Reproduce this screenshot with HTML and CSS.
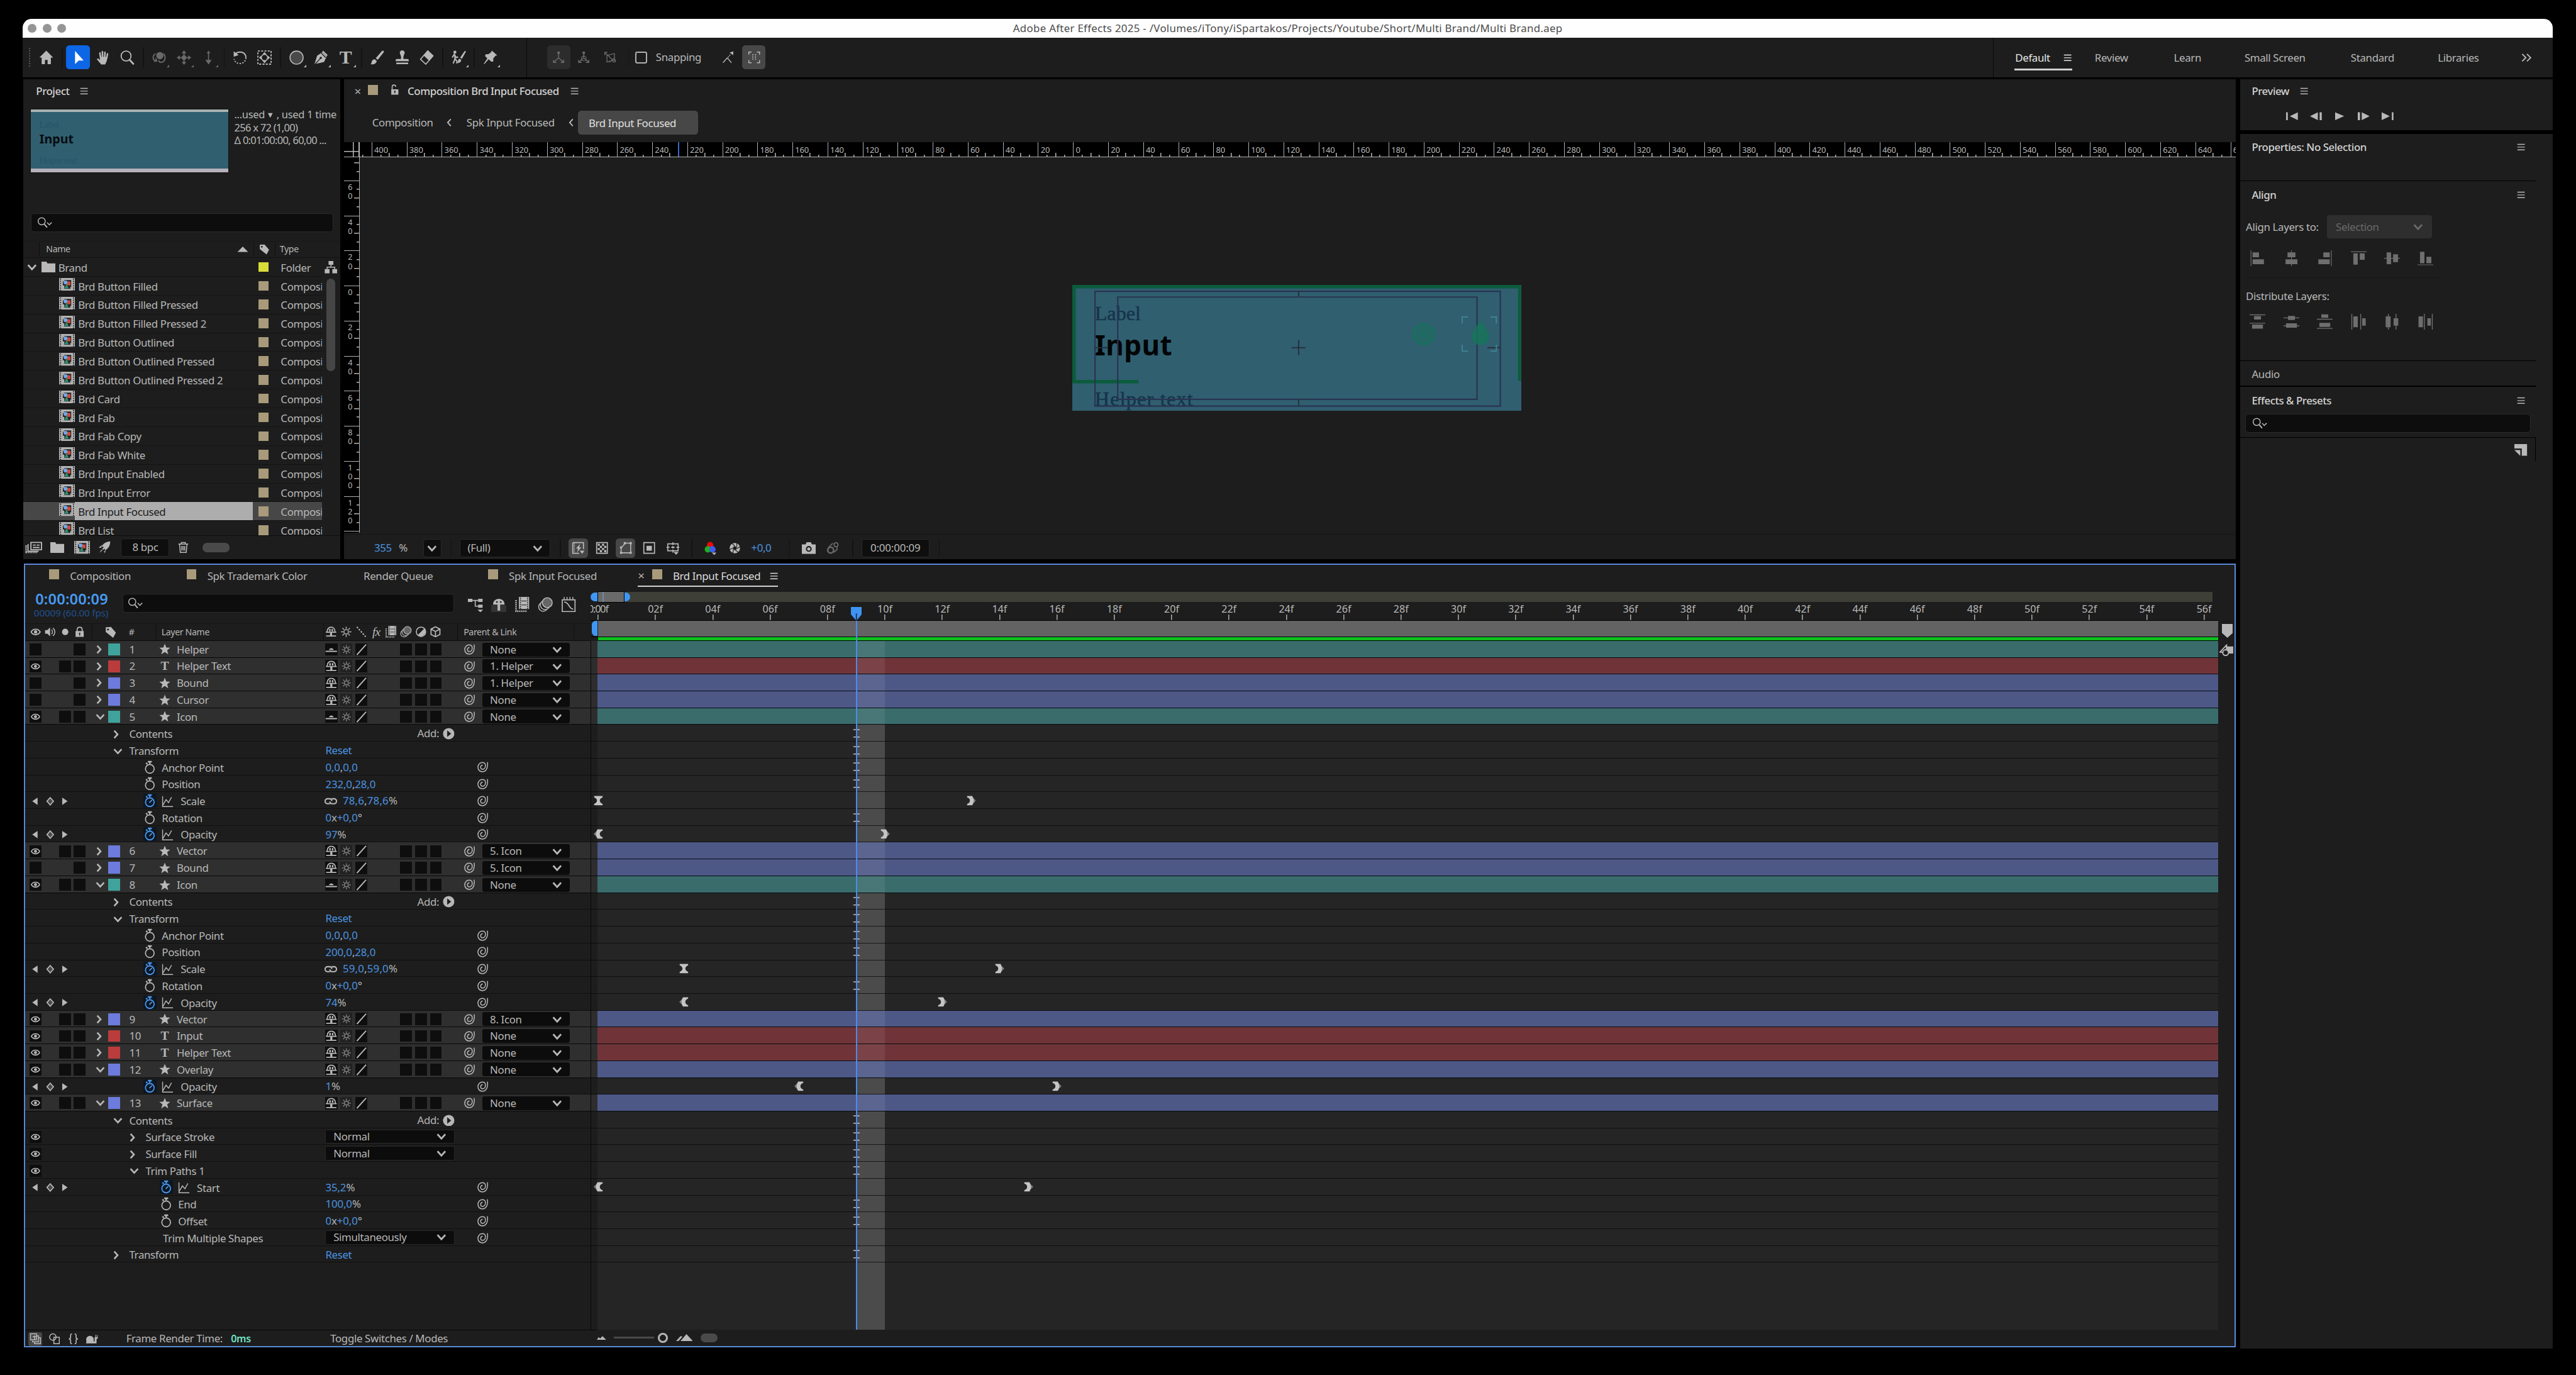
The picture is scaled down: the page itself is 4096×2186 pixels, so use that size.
FILE: index.html
```html
<!DOCTYPE html>
<html lang="en">
<head>
<meta charset="utf-8">
<title>Adobe After Effects 2025</title>
<link rel="stylesheet" href="styles.css">
</head>
<body>
<svg class="sprite" aria-hidden="true">
  <symbol id="home" viewBox="0 0 24 24"><path fill="currentColor" d="M12 1.500 1.500 12H5v10h5v-6.500h4V22h5V12h3.500z"/></symbol>
  <symbol id="arrow" viewBox="0 0 24 24"><path fill="currentColor" d="M7 2v20l5.500-5.500H20z"/></symbol>
  <symbol id="hand" viewBox="0 0 24 24"><path stroke="currentColor" stroke-width="2.400" stroke-linecap="round" d="M8.500 12 7.500 5M11.500 11 11.300 3M14.800 11l.4-7M17.800 12.500l1.200-6"/><path fill="currentColor" d="M7.300 11h11.800l-1.300 6.500-2.300 5h-6L3.300 15c-.8-1.400 1-2.300 2-1.300l2.500 2z"/></symbol>
  <symbol id="zoom" viewBox="0 0 24 24"><g fill="none" stroke="currentColor" stroke-width="1.700"><circle cx="10" cy="9.500" r="7.500"/><path stroke-width="2.600" stroke-linecap="round" d="m15.500 15.500 5.500 6"/></g></symbol>
  <symbol id="orbit" viewBox="0 0 24 24"><circle cx="13.500" cy="9" r="5.500" fill="currentColor"/><path fill="none" stroke="currentColor" stroke-width="1.800" d="M7 6C2 9 2 16 8 17M19 6c4 4 3 11-2 13-3 .8-5-.5-5-3M5 18l4-1-2-4"/></symbol>
  <symbol id="pan" viewBox="0 0 24 24"><path fill="currentColor" d="m12 1 3.500 4.500h-2.600V9h-1.800V5.500H8.500zM12 23l3.500-4.500h-2.600V15h-1.800v3.500H8.500zM1 12l4.500-3.500v2.600H9v1.800H5.500v2.600zM23 12l-4.500-3.500v2.600H15v1.800h3.500v2.600z"/><circle cx="12" cy="12" r="3.500" fill="currentColor"/></symbol>
  <symbol id="dolly" viewBox="0 0 24 24"><path fill="currentColor" d="m12 1.500 2.800 4h-2v10h4L12 22.500 7.200 15.500h4v-10h-2z"/></symbol>
  <symbol id="rotate" viewBox="0 0 24 24"><path fill="none" stroke="currentColor" stroke-width="1.900" d="M5 7c4-6 16-4 16 5"/><path fill="currentColor" d="M2.500 2.500v8.300L10 8z"/><path fill="none" stroke="currentColor" stroke-width="1.900" stroke-dasharray="2 2.200" d="M21 12c0 5-4 9-9 9s-8-3-9-7"/></symbol>
  <symbol id="anchor" viewBox="0 0 24 24"><g fill="none" stroke="currentColor"><path stroke-width="1.800" stroke-dasharray="3 2" d="M2 2h20v20H2z"/><circle cx="12" cy="12" r="4.800" stroke-width="1.500"/></g><path fill="currentColor" d="m12 3.500 3 3.500H9zM12 20.500l3-3.500H9zM3.500 12 7 9v6zM20.500 12 17 9v6z"/></symbol>
  <symbol id="ellipse" viewBox="0 0 24 24"><circle cx="12" cy="12" r="10" fill="#4a4a4a" stroke="currentColor" stroke-width="1.500"/></symbol>
  <symbol id="pen" viewBox="0 0 24 24"><path fill="currentColor" d="m2 22 4-13 8-5 6.500 6-4 8.500z"/><path stroke="#1d1d1d" stroke-width="1.300" d="m3 22 8-9M12.500 5.500l6.500 6.500"/><circle cx="11.500" cy="12.500" r="1.700" fill="#1d1d1d"/><path fill="currentColor" d="m15 1.500 7 6.500-1.500 1.800-7-6.500z"/></symbol>
  <symbol id="brush" viewBox="0 0 24 24"><path fill="currentColor" d="M21.500 1.500c1 .8.800 1.800.3 2.700L13 15.500l-3-2.700L19.500 2c.6-.6 1.300-.9 2-.5zM8.500 14.500l3 2.700C11 21 7 23 2 22c2-1 1.500-3 2.300-5 .8-1.700 2.400-2.700 4.200-2.500z"/></symbol>
  <symbol id="stamp" viewBox="0 0 24 24"><path fill="currentColor" d="M12 1a3.700 3.700 0 0 1 3.400 5.200c-1.600 3.300-2 5.300-1.500 7.800H20c1.500 0 2 1 2 3.500H2C2 15 2.500 14 4 14h6.100c.5-2.500.1-4.500-1.500-7.800A3.700 3.700 0 0 1 12 1zM3 19.500h18V22H3z"/></symbol>
  <symbol id="eraser" viewBox="0 0 24 24"><path fill="currentColor" d="m13.500 1 8.500 8-6 8-9-8.500z"/><path fill="none" stroke="currentColor" stroke-width="1.600" d="m13.500 1.800 8 7.500L10.500 22 2.500 14.500z"/></symbol>
  <symbol id="roto" viewBox="0 0 24 24"><circle cx="7" cy="3.800" r="2.300" fill="currentColor"/><path fill="none" stroke="currentColor" stroke-width="2" d="M3 12l3-5 3 5 3-1M7 9v5l-2.500 7M7 14l3 3v4"/><path fill="currentColor" d="M23 2c.8.700.5 1.500 0 2.300L17.500 14 15 12l6.500-9.500c.5-.6 1-.8 1.500-.5zM14 13.500l2.500 2c0 3-2.500 5-6 4.500 1.300-1 1-2 1.400-3.500.3-1.600 1-2.700 2.100-3z"/></symbol>
  <symbol id="pin" viewBox="0 0 24 24"><path fill="currentColor" d="m14.500 1.500 8 7-2.700.8-3.300 4 .2 4.700-3.200.2-4-3.700L3 22l-.8-.8 5.300-8-3.300-3.500.5-2.500 4.800-.4 3.700-3z"/></symbol>
  <symbol id="axis" viewBox="0 0 24 24"><circle cx="12" cy="3.500" r="2.500" fill="currentColor"/><path fill="none" stroke="currentColor" stroke-width="1.600" d="M12 4v9l-9 8M12 13l9 8M2.500 16.500V21.500H8M21.500 16.500V21.500H16"/></symbol>
  <symbol id="axisworld" viewBox="0 0 24 24"><circle cx="12" cy="3.500" r="2.500" fill="currentColor"/><circle cx="12" cy="14" r="4.500" fill="none" stroke="currentColor" stroke-width="1.400"/><path fill="none" stroke="currentColor" stroke-width="1.600" d="M12 4v9l-9 8M12 13l9 8M2.500 16.500V21.500H8M21.500 16.500V21.500H16"/></symbol>
  <symbol id="axisview" viewBox="0 0 24 24"><path fill="none" stroke="currentColor" stroke-width="1.500" d="M6 8.500 20 5v12L6 20.500zM2 3l15 14M2 8V2.500h5M11 21l10-9M16 20.500h5.500V16"/></symbol>
  <symbol id="snapedge" viewBox="0 0 24 24"><path fill="none" stroke="currentColor" stroke-width="1.600" d="m3 22 8-9 8 9"/><path fill="none" stroke="currentColor" stroke-width="1.600" stroke-dasharray="2.500 1.500" d="m12.500 12 5-6"/><path fill="currentColor" d="m15.500 3 7-2-.5 7z"/></symbol>
  <symbol id="snapbox" viewBox="0 0 24 24"><g fill="none" stroke="currentColor" stroke-width="1.700"><path d="M2 7V2h5M17 2h5v5M22 17v5h-5M7 22H2v-5"/><path stroke-dasharray="2.500 1.500" d="M9.500 6v12M14.500 6v12"/></g></symbol>
  <symbol id="menu" viewBox="0 0 16 16"><path stroke="currentColor" stroke-width="1.900" d="M0 2h16M0 8h16M0 14h16"/></symbol>
  <symbol id="more" viewBox="0 0 24 24"><path fill="none" stroke="currentColor" stroke-width="2.800" d="m2 4 8 8-8 8M12.500 4l8 8-8 8"/></symbol>
  <symbol id="search" viewBox="0 0 32 24"><g fill="none" stroke="currentColor" stroke-width="2"><circle cx="9.500" cy="9" r="7.500"/><path stroke-width="2.600" d="m15 15 6 7"/><path d="m21 11.500 4.500 5 5-5"/></g></symbol>
  <symbol id="down" viewBox="0 0 24 24"><path fill="none" stroke="currentColor" stroke-width="4.300" d="m2.500 6.500 9.500 10.500L21.500 6.500"/></symbol>
  <symbol id="right" viewBox="0 0 24 24"><path fill="none" stroke="currentColor" stroke-width="4.300" d="M7.500 2.500 16 12l-8.500 9.500"/></symbol>
  <symbol id="left" viewBox="0 0 24 24"><path fill="none" stroke="currentColor" stroke-width="3" d="m15 3.500-7.500 8.500L15 20.500"/></symbol>
  <symbol id="tri" viewBox="0 0 24 12"><path fill="currentColor" d="M12 0l12 12H0z"/></symbol>
  <symbol id="tag" viewBox="0 0 24 24"><path fill="currentColor" fill-rule="evenodd" d="M1.500 1.500 12 1l10 11.500L16.500 23 1.500 11zM6 4a2 2 0 1 0 .01 4A2 2 0 0 0 6 4z"/></symbol>
  <symbol id="folder" viewBox="0 0 28 22"><path fill="currentColor" d="M0 0h10l2 3.500h16V22H0z"/></symbol>
  <symbol id="comp" viewBox="0 0 32 26"><path fill="#b4b4b4" d="M0 0h32v26H0z"/><path stroke="#1d1d1d" stroke-width="2" stroke-dasharray="2.500 2" d="M3 1v25M29 1v25"/><path fill="#222" d="M7.500 4h17v18h-17z"/><path fill="#b4b4b4" d="M7.500 4h3v3h-3zM7.500 15h3v7h-3zM22.500 18h2v4h-2z"/><path fill="#d04a3a" d="M16 7h7v8h-7z"/><path fill="#2f8f72" d="m15 12 4.500 9h-9z"/><circle cx="13" cy="9" r="4" fill="#6ea8e8"/></symbol>
  <symbol id="network" viewBox="0 0 26 26"><path fill="currentColor" d="M8 0h10v8H8zM0 17h10v9H0zM16 17h10v9H16z"/><path fill="none" stroke="currentColor" stroke-width="2" d="M13 8v5M5 17v-4h16v4"/></symbol>
  <symbol id="footage" viewBox="0 0 36 24"><g fill="none" stroke="currentColor" stroke-width="2.500"><path d="M12 1.500h22v15H12zM6 5v15h22"/><path stroke-dasharray="2 1.500" stroke-width="4" d="M2 8v16M2 22h24"/><path d="M16 7h6M24 7h6M16 12h14"/></g></symbol>
  <symbol id="rocket" viewBox="0 0 24 24"><path fill="currentColor" d="M22.500 1c.5 7-3 13-9.500 17l-1-4-3 3-1-3 3-2.500-4-1C9 5 15 1.500 22.500 1zM8 7 1 12.500l4.500.5zM14.500 18 12 23l-1-4zM7 16l-5 6 6-4z"/></symbol>
  <symbol id="trash" viewBox="0 0 24 24"><path fill="none" stroke="currentColor" stroke-width="2" d="M2 5h20M8 5V2h8v3M4.500 5 6 22h12l1.500-17M9 9v9M12 9v9M15 9v9"/></symbol>
  <symbol id="lockopen" viewBox="0 0 20 24"><path fill="currentColor" fill-rule="evenodd" d="M3 11h16v12H3zM11 14a2 2 0 0 0-1 3.500V20h2v-2.500a2 2 0 0 0-1-3.500z"/><path fill="none" stroke="currentColor" stroke-width="2.200" d="M5 12V5.500C5 0 13 0 13 5.500"/></symbol>
  <symbol id="lock" viewBox="0 0 20 24"><path fill="currentColor" fill-rule="evenodd" d="M1 10h18v13H1zM10 13.500a2 2 0 0 0-1 3.500v3h2v-3a2 2 0 0 0-1-3.500z"/><path fill="none" stroke="currentColor" stroke-width="2.400" d="M4.500 11V6.500c0-6.500 11-6.500 11 0V11"/></symbol>
  <symbol id="fast" viewBox="0 0 24 24"><path fill="none" stroke="currentColor" stroke-width="2" d="M2 2h20v12M14 22H2V2"/><path stroke="currentColor" stroke-dasharray="1.500 1.500" stroke-width="2" d="M5 3v18"/><path fill="currentColor" d="m16 4-8 9h4l-2 7 8-9h-4zM15 17h9l-4.500 6z"/></symbol>
  <symbol id="checker" viewBox="0 0 24 24"><path fill="none" stroke="currentColor" stroke-width="2" d="M2 2h20v20H2z"/><path fill="currentColor" d="M4 4h4v4H4zM12 4h4v4h-4zM8 8h4v4H8zM16 8h4v4h-4zM4 12h4v4H4zM12 12h4v4h-4zM8 16h4v4H8zM16 16h4v4h-4z"/></symbol>
  <symbol id="mask" viewBox="0 0 24 24"><path fill="none" stroke="currentColor" stroke-width="1.800" d="M3 21V11C6 9 9 6 10 3h11v18z"/><path fill="currentColor" d="M8 1h4v4H8zM19 1h4v4h-4zM1 9h4v4H1zM1 19h4v4H1zM19 19h4v4h-4z"/></symbol>
  <symbol id="region" viewBox="0 0 24 24"><path fill="none" stroke="currentColor" stroke-width="2" d="M2 2h20v20H2z"/><path fill="currentColor" d="M7 8h10v9H7z"/></symbol>
  <symbol id="guides" viewBox="0 0 24 24"><path fill="none" stroke="currentColor" stroke-width="1.800" d="M3 4h18v12H3zM12 1v5M12 14v5M1 10h5M18 10h5M9 10h6M12 8v4"/><path fill="currentColor" d="M13 18h9l-4.500 5z"/></symbol>
  <symbol id="rgb" viewBox="0 0 24 24"><circle cx="10" cy="6" r="5.500" fill="#f00808"/><circle cx="6" cy="13.500" r="5.500" fill="#1fae1f"/><circle cx="14" cy="13.500" r="5.500" fill="#3f5cf0"/><path fill="#b4b4b4" d="M13 19h8l-4 4.500z"/></symbol>
  <symbol id="aperture" viewBox="0 0 24 24"><circle cx="12" cy="12" r="10.500" fill="currentColor"/><circle cx="12" cy="12" r="3.800" fill="#1d1d1d"/><path stroke="#1d1d1d" stroke-width="1.500" d="M12 8 6 2M16 10V1M16 13l7-4M13 16l7 5M9 15l-1 8M8 12l-7 3"/></symbol>
  <symbol id="camera" viewBox="0 0 26 22"><path fill="currentColor" fill-rule="evenodd" d="M0 4h7l2-4h8l2 4h7v18H0zM13 7a5.500 5.500 0 1 0 .01 11A5.500 5.500 0 0 0 13 7z"/><circle cx="13" cy="12.500" r="3" fill="currentColor"/></symbol>
  <symbol id="snapshot" viewBox="0 0 24 24"><g fill="none" stroke="currentColor"><circle cx="8" cy="16" r="5.500" stroke-width="3"/><circle cx="18" cy="6" r="3.800" stroke-width="2"/><path stroke-width="2" d="M4 11 12 3M20 9v6l-6 5"/></g></symbol>
  <symbol id="flow" viewBox="0 0 24 24"><path fill="currentColor" d="M0 3h7v5H0zM16 3h7v5h-7zM16 12h7v5h-7zM15 20h9l-4.500 4z"/><path fill="none" stroke="currentColor" stroke-width="1.600" d="M7 5.500h9M11.500 5.500v9H16"/></symbol>
  <symbol id="shy" viewBox="0 0 24 24"><path fill="none" stroke="currentColor" stroke-width="2.200" d="M4 12C4 6 7.500 2.800 12 2.800S20 6 20 12M1.500 13h21M12 12v9M2 20.500h20"/><path fill="currentColor" d="M8 6.500h3V11H8zM13 6.500h3V11h-3zM10 13h4v8h-4z"/></symbol>
  <symbol id="shyhid" viewBox="0 0 24 24"><path fill="currentColor" d="M7.500 12.500c1-4.500 8-4.500 9 0zM1 14h22v2.500H1z"/></symbol>
  <symbol id="shybtn" viewBox="0 0 24 24"><path fill="#343434" d="M0 13h24v11H0z"/><path fill="currentColor" d="M3 12C3 6.500 7 3 12 3s9 3.500 9 9h-7v9.500h-4V12z"/><circle cx="9" cy="8" r="1.400" fill="#1d1d1d"/><circle cx="15" cy="8" r="1.400" fill="#1d1d1d"/></symbol>
  <symbol id="film" viewBox="0 0 24 24"><path fill="currentColor" d="M7 0h16v19H7z"/><path stroke="#1d1d1d" stroke-width="1.500" stroke-dasharray="1.600 1.600" d="M9.500 1v18M20.500 1v18"/><path fill="none" stroke="currentColor" stroke-width="2.500" stroke-dasharray="2 1.200" d="M2.500 5v17.500H19"/><path stroke="#1d1d1d" d="M11 6.500h8M11 12.500h8"/></symbol>
  <symbol id="blur" viewBox="0 0 24 24"><g stroke="currentColor" stroke-width="1.500"><circle cx="8.500" cy="15.500" r="7" fill="#1d1d1d"/><circle cx="11.500" cy="12.500" r="7.300" fill="#1d1d1d"/><circle cx="15" cy="9" r="7.700" fill="#666"/></g></symbol>
  <symbol id="graphed" viewBox="0 0 24 24"><path fill="none" stroke="currentColor" stroke-width="1.700" d="M2 4.500h20V23H2zM5 8c8 0 7 11 14 11"/><path stroke="currentColor" stroke-width="1.400" d="M5 0v4M9.500 0v4M14 0v4M18.500 0v4"/></symbol>
  <symbol id="eye" viewBox="0 0 24 24"><path fill="none" stroke="currentColor" stroke-width="2.600" d="M2 12c4-8 16-8 20 0-4 8-16 8-20 0z"/><circle cx="12" cy="12" r="3.600" fill="currentColor"/></symbol>
  <symbol id="speaker" viewBox="0 0 24 24"><path fill="currentColor" d="M1 8h5l6-6v20l-6-6H1z"/><path fill="none" stroke="currentColor" stroke-width="2" d="M15 7c3 2 3 8 0 10M18 3.500c6 4 6 13 0 17"/></symbol>
  <symbol id="dot" viewBox="0 0 24 24"><circle cx="12" cy="12" r="7" fill="currentColor"/></symbol>
  <symbol id="sun" viewBox="0 0 24 24"><g fill="none" stroke="currentColor" stroke-width="1.800"><circle cx="12" cy="12" r="4.500"/><path d="M12 1.500v4.500M12 18v4.500M1.500 12H6M18 12h4.500M4.500 4.500l3.200 3.200M16.300 16.300l3.200 3.200M19.500 4.500l-3.200 3.200M7.700 16.300l-3.200 3.200"/></g></symbol>
  <symbol id="quality" viewBox="0 0 24 24"><path stroke="currentColor" stroke-width="2.600" stroke-dasharray="3.500 2.500" d="m3 2 18 20"/></symbol>
  <symbol id="slash" viewBox="0 0 24 24"><path stroke="currentColor" stroke-width="2.300" d="M3 22 21 2"/></symbol>
  <symbol id="adjust" viewBox="0 0 24 24"><circle cx="12" cy="12" r="9.500" fill="none" stroke="currentColor" stroke-width="2"/><path fill="currentColor" d="M18.700 5.300 5.300 18.700A9.500 9.500 0 0 0 18.700 5.300z"/></symbol>
  <symbol id="cube" viewBox="0 0 24 24"><path fill="none" stroke="currentColor" stroke-width="2.200" d="m12 2 9 4.500v11L12 22l-9-4.500v-11zM3 6.500l9 5 9-5M12 11.500V22"/></symbol>
  <symbol id="star" viewBox="0 0 24 24"><path fill="currentColor" d="m12 .5 3.200 8.200 8.300.3-6.500 5.300 2.300 8.700-7.300-5-7.300 5L7 14.300.5 9l8.300-.3z"/></symbol>
  <symbol id="spiral" viewBox="0 0 24 24"><path fill="none" stroke="currentColor" stroke-width="1.900" d="M21.500 2c.9 4 .7 8-.6 12-1.600 5-5 7.500-9.400 7.500-5.300 0-9-3.800-9-9C2.500 7 6.200 3 11.300 3c4 0 6.400 2.500 6.400 6.300 0 4.200-2.600 7.200-5.700 7.200-2.500 0-4.100-1.500-4.100-4 0-2.300 1.600-4.200 4.100-4.600"/></symbol>
  <symbol id="watch" viewBox="0 0 24 28"><g fill="none" stroke="currentColor" stroke-width="2.200"><circle cx="12" cy="17" r="8.800"/><path stroke-width="3" d="M8 2.500h8M12 2v5M4.500 5 7 7.500"/></g></symbol>
  <symbol id="watchon" viewBox="0 0 24 28"><g fill="none" stroke="currentColor" stroke-width="2.400"><circle cx="12" cy="17" r="8.800"/><path stroke-width="3" d="M8 2.500h8M12 2v5M4.500 5 7 7.500"/><path d="m11 18 5.500-5.500"/></g></symbol>
  <symbol id="curve" viewBox="0 0 24 24"><path fill="none" stroke="currentColor" stroke-width="1.800" d="M2 1v21h21M2 20l7-12 5 6 6-11"/></symbol>
  <symbol id="link" viewBox="0 0 28 20"><g fill="none" stroke="currentColor" stroke-width="2.700"><path d="M12 15H7.500a5 5 0 0 1 0-10h4c3 0 4.500 2 4.500 4.500"/><path d="M16 5h4.500a5 5 0 0 1 0 10h-4c-3 0-4.500-2-4.500-4.500"/></g></symbol>
  <symbol id="kprev" viewBox="0 0 24 24"><path fill="currentColor" d="M18 3v18L5 12z"/></symbol>
  <symbol id="knext" viewBox="0 0 24 24"><path fill="currentColor" d="M6 3v18l13-9z"/></symbol>
  <symbol id="kadd" viewBox="0 0 24 24"><path fill="#4a4a4a" stroke="currentColor" stroke-width="2.500" d="m12 3 8 9-8 9-8-9z"/></symbol>
  <symbol id="addplay" viewBox="0 0 24 24"><circle cx="12" cy="12" r="11.500" fill="currentColor"/><path fill="#1d1d1d" d="M9 5.500v13l8-6.500z"/></symbol>
  <symbol id="ibeam" viewBox="0 0 16 20"><path fill="none" stroke="#b9b9c4" stroke-width="2.200" d="M1 2h5l2 1.500L10 2h5M1 18h5l2-1.500L10 18h5M8 3v14"/></symbol>
  <symbol id="keyhour" viewBox="0 0 20 20"><path fill="#c4c4c4" d="M1 0h18v3c-3 1-6 3.500-6 7s3 6 6 7v3H1v-3c3-1 6-3.500 6-7S4 4 1 3z"/></symbol>
  <symbol id="keyin" viewBox="0 0 20 20"><path fill="#7f7f7f" d="M10 0v20L0 10z"/><path fill="#c4c4c4" d="M8 0h11v3c-4 1-6 3.500-6 7s2 6 6 7v3H8C4 13 4 7 8 0z"/></symbol>
  <symbol id="keyout" viewBox="0 0 20 20"><path fill="#7f7f7f" d="M10 0v20l10-10z"/><path fill="#c4c4c4" d="M12 0H1v3c4 1 6 3.500 6 7s-2 6-6 7v3h11c4-7 4-13 0-20z"/></symbol>
  <symbol id="draft" viewBox="0 0 24 24"><path fill="none" stroke="currentColor" stroke-width="1.900" d="M2 2h12v12H2zM6 16v2h12V6h-3M10 19v3h12V10h-3M6 8h8M10 5v9"/></symbol>
  <symbol id="modes" viewBox="0 0 24 24"><g fill="none" stroke="currentColor" stroke-width="1.900"><circle cx="9" cy="8.500" r="6.500"/><path d="M11 9h11v13H11z"/></g></symbol>
  <symbol id="braces" viewBox="0 0 24 24"><path fill="none" stroke="currentColor" stroke-width="2.300" d="M9 1C5 1 6 5 6 8s-1 4-4 4c3 0 4 1 4 4s-1 7 3 7M15 1c4 0 3 4 3 7s1 4 4 4c-3 0-4 1-4 4s1 7-3 7"/></symbol>
  <symbol id="snail" viewBox="0 0 28 24"><path fill="currentColor" d="M1 18a9 9 0 1 1 16 0h3V8h2V2h1.500v6H26V3h1.500v8l-3 2v10H0v-3z"/></symbol>
  <symbol id="hill" viewBox="0 0 20 8"><path fill="currentColor" d="M0 8 4 2l3 3 5-5 8 8z"/></symbol>
  <symbol id="hills" viewBox="0 0 34 14"><path fill="currentColor" d="M9 14 21 0l13 14zM0 14 9 4l4 1-8 9z"/></symbol>
  <symbol id="first" viewBox="0 0 24 16"><path fill="currentColor" d="M0 0h3.500v16H0zM24 0v16L7.500 8z"/></symbol>
  <symbol id="prevf" viewBox="0 0 24 16"><path fill="currentColor" d="M16 0v16L0 8zM19.500 0H24v16h-4.500z"/></symbol>
  <symbol id="play" viewBox="0 0 18 16"><path fill="currentColor" d="M0 0l18 8-18 8z"/></symbol>
  <symbol id="nextf" viewBox="0 0 24 16"><path fill="currentColor" d="M8 0v16l16-8zM0 0h4.500v16H0z"/></symbol>
  <symbol id="last" viewBox="0 0 24 16"><path fill="currentColor" d="M20.500 0H24v16h-3.500zM0 0v16l16.500-8z"/></symbol>
  <symbol id="al1" viewBox="0 0 32 32"><path fill="currentColor" d="M2 0h1.500v32H2zM6 4h13v10H6zM6 18h23v10H6z"/></symbol>
  <symbol id="al2" viewBox="0 0 32 32"><path fill="currentColor" d="M15.300 0h1.500v32h-1.500zM8 4h16v10H8zM4 18h24v10H4z"/></symbol>
  <symbol id="al3" viewBox="0 0 32 32"><path fill="currentColor" d="M28.500 0H30v32h-1.500zM13 4h13v10H13zM3 18h23v10H3z"/></symbol>
  <symbol id="al4" viewBox="0 0 32 32"><path fill="currentColor" d="M0 2h32v1.500H0zM5 6h9v23H5zM18 6h10v13H18z"/></symbol>
  <symbol id="al5" viewBox="0 0 32 32"><path fill="currentColor" d="M0 15.300h32v1.500H0zM5 4h9v24H5zM18 8h10v16H18z"/></symbol>
  <symbol id="al6" viewBox="0 0 32 32"><path fill="currentColor" d="M0 28.500h32V30H0zM5 3h9v23H5zM18 13h10v13H18z"/></symbol>
  <symbol id="di1" viewBox="0 0 32 32"><path fill="currentColor" d="M0 1h32v1.800H0zM9 4.500h14v7H9zM0 18h32v1.800H0zM5 21.500h22V30H5z"/></symbol>
  <symbol id="di2" viewBox="0 0 32 32"><path fill="currentColor" d="M0 7.300h32V9H0zM9 4h14v8.500H9zM0 23.300h32V25H0zM5 19h22v9H5z"/></symbol>
  <symbol id="di3" viewBox="0 0 32 32"><path fill="currentColor" d="M9 1h14v7H9zM0 10h32v1.800H0zM5 18h22v8.500H5zM0 28.500h32v1.800H0z"/></symbol>
  <symbol id="di4" viewBox="0 0 32 32"><path fill="currentColor" d="M1 0h1.800v32H1zM5 5h9v22H5zM19 0h1.800v32H19zM23 9h7v15h-7z"/></symbol>
  <symbol id="di5" viewBox="0 0 32 32"><path fill="currentColor" d="M7.500 0h1.800v32H7.500zM3 5h10v22H3zM23 0h1.800v32H23zM19 9h9.500v15H19z"/></symbol>
  <symbol id="di6" viewBox="0 0 32 32"><path fill="currentColor" d="M2 5h9v22H2zM13 0h1.800v32H13zM20 9h7v15h-7zM29 0h1.800v32H29z"/></symbol>
  <symbol id="note" viewBox="0 0 26 24"><path fill="currentColor" d="M0 0h26v24H15V9H0zM0 12h12v12z"/></symbol>
  <symbol id="marker" viewBox="0 0 22 28"><path fill="currentColor" d="M0 0h22v18L11 28 0 18z"/></symbol>
  <symbol id="compbtn" viewBox="0 0 30 26"><path fill="none" stroke="currentColor" stroke-width="2.500" d="M1 17 15 2v15z"/><path fill="currentColor" d="M14 5h15v15H14z"/><circle cx="13" cy="18" r="6" fill="#1d1d1d" stroke="currentColor" stroke-width="2.500"/></symbol>
</svg>

<div class="screen">
<div class="window">
  <header class="titlebar">
    <div class="lights"><i></i><i></i><i></i></div>
    <span class="title">Adobe After Effects 2025 - /Volumes/iTony/iSpartakos/Projects/Youtube/Short/Multi Brand/Multi Brand.aep</span>
  </header>

  <nav class="toolbar">
    <div class="tools" id="tools"></div>
    <div class="snapping">
      <span class="toolbtn dimmed"><svg class="ic26"><use href="#axis"/></svg></span>
      <svg class="ic26 dim"><use href="#axisworld"/></svg>
      <svg class="ic26 dim"><use href="#axisview"/></svg>
      <i class="vsep"></i>
      <i class="checkbox"></i>
      <span class="snaplabel">Snapping</span>
      <svg class="ic26"><use href="#snapedge"/></svg>
      <span class="toolbtn lit"><svg class="ic26"><use href="#snapbox"/></svg></span>
    </div>
    <div class="workspaces">
      <span class="ws active">Default <svg class="menu"><use href="#menu"/></svg></span>
      <span class="ws w2">Review</span><span class="ws w3">Learn</span><span class="ws w4">Small Screen</span><span class="ws w5">Standard</span><span class="ws w6">Libraries</span>
      <svg class="ic22"><use href="#more"/></svg>
    </div>
  </nav>

  <div class="workarea">
    <div class="mainside">
      <div class="upper">
        <section class="project">
          <div class="tabline"><b>Project</b><svg class="menu"><use href="#menu"/></svg></div>
          <div class="preview">
            <div class="thumb"><span class="t-label">Label</span><span class="t-input">Input</span><span class="t-help">Helper text</span></div>
            <div class="info"><p class="wide">...used<small>▼</small> , used 1 time</p><p>256 x 72 (1,00)</p><p>Δ 0:01:00:00, 60,00 ...</p></div>
          </div>
          <div class="searchbox"><svg class="search"><use href="#search"/></svg></div>
          <div class="phead"><span class="h-name">Name</span><svg class="h-tri"><use href="#tri"/></svg><span class="h-tag"><svg class="ic22"><use href="#tag"/></svg></span><span class="h-type">Type</span></div>
          <div class="plist">
            <div class="prows" id="prows"></div>
            <div class="pscroll"><svg class="net"><use href="#network"/></svg><i></i></div>
          </div>
          <div class="pfoot">
            <svg class="ic-foot"><use href="#footage"/></svg>
            <svg class="ic-folder"><use href="#folder"/></svg>
            <svg class="ic-comp"><use href="#comp"/></svg>
            <svg class="ic26"><use href="#rocket"/></svg>
            <span class="darkbox bpc">8 bpc</span>
            <svg class="ic24"><use href="#trash"/></svg>
            <i class="pill"></i>
          </div>
        </section>

        <section class="viewer">
          <div class="vtab"><span class="x">×</span><i class="sw"></i><svg class="ic-lock"><use href="#lockopen"/></svg><b>Composition Brd Input Focused</b><svg class="menu"><use href="#menu"/></svg></div>
          <div class="crumbs"><span class="c1">Composition</span><svg class="ic20"><use href="#left"/></svg><span class="c2">Spk Input Focused</span><svg class="ic20"><use href="#left"/></svg><span class="crumb">Brd Input Focused</span></div>
          <div class="hrulerline"><div class="corner"></div><div class="hruler" id="hruler"></div></div>
          <div class="stage">
            <div class="vruler" id="vruler"></div>
            <div class="canvas">
              <div class="comp">
                <span class="k-label">Label</span>
                <span class="k-input">Input</span>
                <span class="k-help">Helper text</span>
                <svg class="overlay" viewBox="0 0 908 255">
                  <path fill="#0b5c3c" d="M0 0h908v194h-6V7H7v185h127v7H0z"/>
                  <g fill="none" stroke="#2a3450" stroke-width="2.800"><path d="M46 13h820v232H46zM92 24.500h727v207H92z"/></g>
                  <g fill="none" stroke="#26303c" stroke-width="2.500"><path d="M458 112v30M444 127h28M458 13v10M458 232v11M46 127h26M840 127h26"/></g>
                  <g opacity=".8"><circle cx="711" cy="100" r="20" fill="none" stroke="#17735a" stroke-width="5"/><path stroke="#17735a" stroke-width="4" d="m703 91 16 17m0-17-16 17"/><circle cx="711" cy="100" r="22" fill="#17735a" fill-opacity=".45"/></g>
                  <path fill="#17735a" fill-opacity=".85" d="M826 72c11 16 18 24 18 33s-8 17-18 17-18-8-18-17 7-17 18-33z"/>
                  <path fill="none" stroke="#3f8294" stroke-width="2.500" d="M789 78V65h12M846 65h12v13M858 121v13h-12M801 134h-12v-13"/>
                </svg>
              </div>
            </div>
          </div>
          <div class="vfoot">
            <span class="blue z">355</span><span class="pct">%</span>
            <span class="darkbox mini"><svg class="ic20"><use href="#down"/></svg></span>
            <i class="vsep"></i>
            <span class="darkbox full">(Full)<svg class="ic20"><use href="#down"/></svg></span>
            <i class="vsep s2"></i>
            <span class="fb on"><svg class="ic26"><use href="#fast"/></svg></span>
            <span class="fb"><svg class="ic26"><use href="#checker"/></svg></span>
            <span class="fb on"><svg class="ic26"><use href="#mask"/></svg></span>
            <span class="fb"><svg class="ic26"><use href="#region"/></svg></span>
            <span class="fb"><svg class="ic28"><use href="#guides"/></svg></span>
            <i class="vsep s3"></i>
            <span class="fb"><svg class="ic28"><use href="#rgb"/></svg></span>
            <span class="fb"><svg class="ic24"><use href="#aperture"/></svg></span>
            <span class="blue ex">+0,0</span>
            <i class="vsep s4"></i>
            <span class="fb"><svg class="ic-cam"><use href="#camera"/></svg></span>
            <span class="fb dim2"><svg class="ic26"><use href="#snapshot"/></svg></span>
            <i class="vsep s5"></i>
            <span class="darkbox tc">0:00:00:09</span>
            <i class="vsep s6"></i>
          </div>
        </section>
      </div>

      <section class="timeline">
        <div class="ttabs">
          <span class="tt t1"><i class="sw"></i>Composition</span>
          <span class="tt t2"><i class="sw"></i>Spk Trademark Color</span>
          <span class="tt t3">Render Queue</span>
          <span class="tt t4"><i class="sw"></i>Spk Input Focused</span>
          <span class="tt t5"><span class="x">×</span><i class="sw"></i>Brd Input Focused<svg class="menu"><use href="#menu"/></svg></span>
        </div>
        <div class="tbody">
          <div class="layers">
            <div class="tctl">
              <div class="clock"><strong>0:00:00:09</strong><small>00009 (60.00 fps)</small></div>
              <div class="searchbox"><svg class="search"><use href="#search"/></svg></div>
              <div class="tbtns"><svg><use href="#flow"/></svg><svg><use href="#shybtn"/></svg><svg><use href="#film"/></svg><svg><use href="#blur"/></svg><svg><use href="#graphed"/></svg></div>
            </div>
            <div class="lhead">
              <svg><use href="#eye"/></svg><svg><use href="#speaker"/></svg><svg><use href="#dot"/></svg><svg><use href="#lock"/></svg>
              <span class="lh-tag"><svg class="ic24"><use href="#tag"/></svg></span><span class="lh-num">#</span><span class="lh-name">Layer Name</span>
              <svg><use href="#shy"/></svg><svg><use href="#sun"/></svg><svg><use href="#quality"/></svg><em>fx</em><svg><use href="#film"/></svg><svg><use href="#blur"/></svg><svg><use href="#adjust"/></svg><svg><use href="#cube"/></svg>
              <span class="lh-par">Parent &amp; Link</span>
            </div>
            <div id="lrows"></div>
          </div>
          <div class="graph">
            <div class="navbar"><i class="nav-start"></i><i class="nav-range"></i><i class="nav-end"></i></div>
            <div class="truler" id="truler"></div>
            <div class="workbar"><i></i></div>
            <div class="cache"></div>
            <div class="tracks"><div class="nowband"></div><div id="grows"></div></div>
            <div class="playhead"><svg viewBox="0 0 22 28"><path fill="#3f94f2" d="M0 0h22v15L11 28 0 15z"/><path stroke="#10233c" stroke-width="2" d="M11 13v15"/></svg></div>
          </div>
          <div class="tside"><svg class="mk"><use href="#marker"/></svg><svg class="cb"><use href="#compbtn"/></svg></div>
        </div>
        <div class="tfoot">
          <div class="tf-left">
            <span class="tfb on"><svg class="ic24"><use href="#draft"/></svg></span><span class="tfb"><svg class="ic24"><use href="#modes"/></svg></span><span class="tfb"><svg class="ic22"><use href="#braces"/></svg></span><span class="tfb"><svg class="ic24"><use href="#snail"/></svg></span>
            <span class="frt">Frame Render Time:</span><strong>0ms</strong>
            <span class="tsm">Toggle Switches / Modes</span>
          </div>
          <svg class="hill"><use href="#hill"/></svg><i class="rail"></i><i class="knob"></i><svg class="hills"><use href="#hills"/></svg><i class="pill"></i>
        </div>
      </section>
    </div>

    <aside class="right">
      <section class="r-preview">
        <div class="rt"><b>Preview</b><svg class="menu"><use href="#menu"/></svg></div>
        <div class="transport"><svg><use href="#first"/></svg><svg><use href="#prevf"/></svg><svg><use href="#play"/></svg><svg><use href="#nextf"/></svg><svg><use href="#last"/></svg></div>
      </section>
      <section class="r-rest">
        <div class="rsec props"><div class="rt2"><b>Properties: No Selection</b><svg class="menu"><use href="#menu"/></svg></div></div>
        <div class="rsec align">
          <div class="rt2"><b>Align</b><svg class="menu"><use href="#menu"/></svg></div>
          <div class="alto">Align Layers to:<span class="target">Selection<svg class="ic20"><use href="#down"/></svg></span></div>
          <div class="icons"><svg><use href="#al1"/></svg><svg><use href="#al2"/></svg><svg><use href="#al3"/></svg><svg><use href="#al4"/></svg><svg><use href="#al5"/></svg><svg><use href="#al6"/></svg></div>
          <div class="dist">Distribute Layers:</div>
          <div class="icons"><svg><use href="#di1"/></svg><svg><use href="#di2"/></svg><svg><use href="#di3"/></svg><svg><use href="#di4"/></svg><svg><use href="#di5"/></svg><svg><use href="#di6"/></svg></div>
        </div>
        <div class="rsec audio"><div class="rt2">Audio</div></div>
        <div class="rsec fx"><div class="rt2"><b>Effects &amp; Presets</b><svg class="menu"><use href="#menu"/></svg></div>
          <div class="searchbox"><svg class="search"><use href="#search"/></svg></div></div>
        <div class="newbin"><svg><use href="#note"/></svg></div>
      </section>
    </aside>
  </div>
</div>
</div>
<script src="app.js"></script>
</body>
</html>
```
FILE: styles.css
```css
* { box-sizing: border-box; }
html, body { margin: 0; height: 100%; overflow: hidden; background: #000; }
body { font-family: "Noto Sans", "Open Sans", sans-serif; font-size: 21.5px; letter-spacing: -.021em; color: #b8b8b8; line-height: 1.2; }
svg { display: block; flex: none; }
i { display: block; flex: none; font-style: normal; }
p { margin: 0; }
b { font-weight: 500; color: #d2d2d2; letter-spacing: -.028em; }
.sprite { display: none; }

.screen { width: 5212px; height: 2782px; zoom: .78588; padding: 38px 47px 0 46px; background: #000; overflow: hidden; white-space: nowrap; }
.window { height: 2690px; display: flex; flex-direction: column; border-radius: 18px 18px 0 0; overflow: hidden; }

.ic20 { width: 20px; height: 20px; }
.ic22 { width: 22px; height: 22px; }
.ic24 { width: 24px; height: 24px; }
.ic26 { width: 26px; height: 26px; }
.ic28 { width: 28px; height: 28px; }
.menu { width: 17px; height: 15px; }
.sw { width: 20px; height: 20px; background: #a89a7a; }
.x { color: #b6b6b6; font-size: 24px; line-height: 20px; letter-spacing: 0; }
.blue { color: #4b93e0; }
.darkbox { background: #0e0e0e; border: 2px solid #292929; border-radius: 6px; display: flex; align-items: center; height: 37px; }
.searchbox { background: #0d0d0d; border: 2px solid #2a2a2a; border-radius: 7px; display: flex; align-items: center; height: 38px; padding-left: 12px; }
.search { width: 31px; height: 23px; }
.vsep { width: 2px; height: 36px; background: #131313; }
.pill { width: 55px; height: 18px; border-radius: 9px; background: #4a4a4a; }

/* title bar */
.titlebar { height: 38px; flex: none; background: #fefefe; display: grid; grid-template-columns: 1fr auto 1fr; align-items: center; color: #4c4c4c; }
.lights { display: flex; gap: 12px; padding-left: 10px; }
.lights i { width: 18px; height: 18px; border-radius: 50%; background: #959595; }
.title { font-size: 21.5px; letter-spacing: .017em; }

/* tool bar */
.toolbar { height: 80px; flex: none; background: #1d1d1d; display: flex; }
.tools { width: 1020px; border-right: 2px solid #0a0a0a; display: flex; align-items: center; padding-left: 13px; }
.grip { width: 4px; height: 38px; margin-right: 6px; border-left: 3px dotted #555; }
.tool { width: 50px; height: 48px; display: flex; align-items: center; justify-content: center; position: relative; }
.tool svg { width: 32px; height: 32px; }
.tool.dimt { color: #6a6a6a; }
.tool.on { background: #0d66e6; border-radius: 7px; color: #fff; width: 48px; margin: 0 1px; }
.tool.flyout::after { content: ""; position: absolute; right: 5px; bottom: 4px; border: 3.500px solid transparent; border-right-color: currentColor; border-bottom-color: currentColor; }
.tool .tee { font: bold 38px/1 "Liberation Serif", serif; letter-spacing: 0; }
.tools .vsep { margin: 0 6px; height: 40px; }
.snapping { flex: 1; display: flex; align-items: center; padding-left: 41px; }
.toolbtn { width: 47px; height: 48px; border-radius: 7px; display: flex; align-items: center; justify-content: center; flex: none; }
.toolbtn.dimmed { background: #2c2c2c; color: #6d6d6d; margin-right: 14px; }
.dim { color: #6d6d6d; margin-right: 27px; }
.snapping .dim + .dim { margin-right: 25px; }
.checkbox { width: 24px; height: 24px; border: 3.500px solid #b0b0b0; border-radius: 4px; margin: 0 18px 0 11px; }
.snaplabel { width: 133px; }
.toolbtn.lit { background: #484848; margin-left: 16px; }
.workspaces { width: 1132px; border-left: 2px solid #0a0a0a; display: flex; align-items: center; }
.ws { flex: none; padding-top: 2px; }
.ws.active { margin-left: 41px; width: 117px; height: 52px; display: flex; align-items: center; justify-content: space-between; color: #e6e6e6; border-bottom: 5px solid #d0d0d0; padding: 6px 0 0 2px; }
.ws.w2 { margin-left: 46px; width: 160px; } .ws.w3 { width: 143px; } .ws.w4 { width: 215px; } .ws.w5 { width: 176px; } .ws.w6 { width: 169px; }

/* split layout */
.workarea { flex: 1; display: flex; gap: 8px; padding-top: 4px; background: #000; min-height: 0; }
.mainside { width: 4478px; display: flex; flex-direction: column; }
.upper { height: 971px; flex: none; display: flex; gap: 7px; padding-left: 1px; }
.project { width: 642px; flex: none; background: #1d1d1d; display: flex; flex-direction: column; }
.tabline { height: 62px; padding: 10px 0 22px 26px; display: flex; align-items: center; gap: 21px; flex: none; }
.preview { display: flex; gap: 12px; padding-left: 15px; height: 210px; flex: none; }
.thumb { width: 400px; height: 127px; background: #305f70; border-top: 6px solid #a9b2b2; border-bottom: 8px solid #b5b0ba; display: flex; flex-direction: column; padding-left: 18px; outline: 1px solid #111; }
.thumb span { line-height: 1; }
.thumb .t-label { font: 18px/1 "Liberation Serif", serif; color: #27536a; margin-top: 16px; }
.thumb .t-input { font-weight: 700; font-size: 25px; color: #060c10; margin-top: 8px; letter-spacing: 0; }
.thumb .t-help { font: 18px/1 "Liberation Serif", serif; color: #27536a; margin-top: 21px; }
.info { font-size: 21px; line-height: 25.500px; letter-spacing: -.043em; margin-top: -3px; }
.info .wide { letter-spacing: -.018em; }
.info small { font-size: 16px; vertical-align: 2px; margin-left: 3px; }
.project .searchbox { width: 613px; margin-left: 15px; flex: none; }
.phead { margin-top: 17px; height: 35px; border-bottom: 2px solid #121212; border-top: 2px solid #171717; display: flex; align-items: center; font-size: 18px; flex: none; }
.phead > span { height: 28px; display: flex; align-items: center; }
.h-name { width: 401px; margin-left: 32px; padding-left: 13px; border-left: 2px solid #101010; }
.h-tri { width: 23px; height: 11px; margin-right: 10px; }
.h-tag { border-left: 2px solid #101010; border-right: 2px solid #101010; width: 44px; justify-content: center; }
.h-type { padding-left: 9px; }
.plist { flex: 1; display: flex; overflow: hidden; min-height: 0; }
.prows { width: 605px; overflow: hidden; flex: none; }
.prow { height: 38px; border-bottom: 2px solid #141414; display: flex; align-items: center; overflow: hidden; }
.prow .item { width: 464px; display: flex; align-items: center; height: 100%; flex: none; }
.prow .item > .ic-comp { margin: 0 0 6px 73px; }
.prow .txt { padding-left: 6px; height: 100%; display: flex; align-items: center; flex: 1; padding-top: 3px; }
.prow .sq { width: 20px; height: 20px; margin: 0 25px 0 12px; background: #a89a7a; }
.prow .sq.yellow { background: #d8dc38; }
.prow .ty { padding-top: 3px; }
.prow .ic20 { margin: 0 9px 0 8px; }
.prow.picked { background: #474747; }
.prow.picked .txt { background: #adadad; color: #1a1a1a; }
.ic-comp { width: 32px; height: 26px; }
.ic-folder { width: 28px; height: 22px; }
.pscroll { padding: 6px 0 0 4px; }
.pscroll i { width: 18px; height: 187px; border-radius: 9px; background: #464646; margin: 11px 0 0 4px; }
.net { width: 26px; height: 25px; }
.pfoot { height: 48px; flex: none; border-top: 2px solid #0e0e0e; display: flex; align-items: center; padding-left: 4px; }
.ic-foot { width: 35px; height: 24px; margin-right: 16px; }
.pfoot .ic-comp { margin: 0 17px 0 20px; }
.bpc { width: 98px; justify-content: center; margin: 0 16px 0 20px; }
.pfoot .ic24 { margin-right: 27px; }

/* composition viewer */
.viewer { flex: 1; background: #1d1d1d; display: flex; flex-direction: column; min-width: 0; }
.vtab { height: 50px; display: flex; align-items: center; padding-left: 21px; flex: none; }
.vtab .sw { margin: -6px 24px 0 14px; }
.ic-lock { width: 18px; height: 22px; margin: -8px 18px 0 0; }
.vtab b { width: 330px; }
.crumbs { height: 78px; display: flex; align-items: center; padding: 0 0 1px 57px; flex: none; }
.c1 { width: 147px; } .crumbs .c2 { margin-left: 24px; width: 203px; }
.crumb { background: #474747; border-radius: 7px; width: 243px; height: 48px; line-height: 50px; padding-left: 21px; margin-left: 3px; color: #e0e0e0; }
.hrulerline { height: 30px; background: #000; display: flex; flex: none; border-bottom: 2px solid #b0b0b0; }
.corner { width: 32px; border-right: 3px solid #b8b8b8; background: linear-gradient(#b0b0b0, #b0b0b0) 0 17px / 100% 2px no-repeat, linear-gradient(#b0b0b0, #b0b0b0) 18px 0 / 2px 100% no-repeat; flex: none; }
.hruler { display: flex; overflow: hidden; position: relative; flex: 1; }
.hcell { width: 70.960px; flex: none; border-left: 2px solid #b0b0b0; padding: 6px 0 0 4px; font-size: 16.500px; line-height: 19px; letter-spacing: -.01em; background: linear-gradient(#b0b0b0, #b0b0b0) 16px 100% / 2px 4px no-repeat, linear-gradient(#b0b0b0, #b0b0b0) 33.500px 100% / 2px 8px no-repeat, linear-gradient(#b0b0b0, #b0b0b0) 51px 100% / 2px 4px no-repeat; }
.hcell:first-child { margin-left: -47px; }
.hcur { position: absolute; left: 644px; top: 0; width: 2px; height: 30px; background: #4468c8; }
.stage { flex: 1; display: flex; min-height: 0; }
.vruler { width: 32px; background: #000; border-right: 2px solid #b0b0b0; overflow: hidden; flex: none; height: 760px; }
.vcell { height: 70.960px; border-top: 2px solid #b0b0b0; font-size: 16px; line-height: 18px; padding: 4px 0 0 8px; background: linear-gradient(#b0b0b0, #b0b0b0) 100% 16px / 5px 2px no-repeat, linear-gradient(#b0b0b0, #b0b0b0) 100% 33.500px / 10px 2px no-repeat, linear-gradient(#b0b0b0, #b0b0b0) 100% 51px / 5px 2px no-repeat; }
.vcell:first-child { margin-top: -24px; }
.vcell span { display: block; }
.canvas { padding: 258px 0 0 1442px; }
.comp { width: 908px; height: 255px; background: #305f70; position: relative; overflow: hidden; }
.comp span { position: absolute; left: 45px; line-height: 1; }
.comp .k-label { top: 38px; font-size: 41px; font-family: "Liberation Serif", serif; color: #15344a; letter-spacing: 0; -webkit-text-stroke: .6px #15344a; }
.comp .k-input { top: 93px; font-size: 56px; font-weight: 700; color: #020506; letter-spacing: .01em; }
.comp .k-help { top: 211px; font-size: 41px; font-family: "Liberation Serif", serif; color: #15344a; letter-spacing: .037em; -webkit-text-stroke: .6px #15344a; }
.overlay { width: 908px; height: 255px; position: absolute; left: 0; top: 0; }
.vfoot { height: 51px; border-top: 2px solid #141414; display: flex; align-items: center; padding: 6px 0 0 61px; flex: none; }
.vfoot .z { width: 50px; } .pct { width: 49px; }
.darkbox.mini { width: 37px; justify-content: center; margin-right: 19px; }
.darkbox.full { width: 183px; justify-content: space-between; padding: 0 14px 0 15px; margin: 0 20px 0 16px; }
.fb { width: 48px; height: 40px; display: flex; align-items: center; justify-content: center; flex: none; }
.fb.on { background: #474747; width: 40px; margin: 0 4px; border-radius: 7px; }
.s2 { margin-right: 11px; } .s3 { margin: 0 14px 0 13px; }
.ex { width: 86px; padding-left: 9px; } .s4 { margin-right: 14px; }
.dim2 { color: #6a6a6a; } .s5 { margin: 0 16px; }
.ic-cam { width: 28px; height: 24px; }
.darkbox.tc { width: 138px; justify-content: center; margin-right: 19px; letter-spacing: -.01em; }

/* timeline */
.timeline { margin: 9px 0 0 2px; height: 1586px; flex: none; background: #1d1d1d; border: 3px solid #5b88d6; display: flex; flex-direction: column; }
.ttabs { height: 47px; flex: none; display: flex; align-items: center; padding-left: 49px; }
.tt { display: flex; align-items: center; height: 100%; flex: none; }
.tt .sw { margin: -8px 22px 0 0; }
.t1 { width: 278px; } .t2 { width: 358px; } .t3 { width: 252px; } .t4 { width: 303px; }
.t5 { width: 284px; color: #dedede; background: linear-gradient(#d0d0d0, #d0d0d0) 0 42px / 100% 3px no-repeat; }
.t5 .x { width: 29px; } .t5 .menu { margin-left: auto; }
.tbody { flex: 1; display: flex; min-height: 0; }
.layers { width: 1144px; flex: none; }
.tctl { height: 71px; display: flex; padding-top: 5px; }
.clock { width: 197px; padding-left: 21px; flex: none; display: flex; flex-direction: column; }
.clock strong { color: #479bf2; font-weight: 600; font-size: 30px; line-height: 35px; letter-spacing: .008em; }
.clock small { color: #1f508f; font-size: 19.500px; line-height: 22px; margin-left: -3px; letter-spacing: -.015em; }
.tctl .searchbox { width: 671px; margin-top: 7px; padding-left: 10px; flex: none; }
.tbtns { display: flex; gap: 16px; padding: 13px 0 0 28px; }
.tbtns svg { width: 31px; height: 31px; }
.lhead { height: 36px; border-top: 2px solid #151515; border-bottom: 2px solid #0c0c0c; display: flex; align-items: center; padding-left: 6px; font-size: 18px; }
.lhead > svg { width: 24px; height: 24px; margin: 0 3.100px; }
.lhead > svg:nth-child(-n+4) { margin: 0 4px; width: 22px; height: 22px; }
.lhead em { width: 30.200px; text-align: center; font: italic 25px "Liberation Serif", serif; letter-spacing: -.05em; }
.lhead > span { height: 100%; display: flex; align-items: center; flex: none; padding-top: 2px; }
.lh-tag { width: 75px; margin-left: 9px; border-left: 2px solid #101010; padding-left: 26px; }
.lh-num { width: 55px; } .lh-name { width: 340px; padding-left: 10px; border-left: 2px solid #101010; border-right: 2px solid #101010; margin-right: 0; }
.lh-par { border-left: 2px solid #101010; border-right: 2px solid #101010; margin-left: 29px; padding-left: 11px; width: 236px; }
.lrow { height: 34px; border-bottom: 2px solid #101010; display: flex; align-items: center; padding: 3px 0 0 6px; }
.lrow.layer { background: #2f2f2f; border-bottom-color: #080808; padding-top: 2px; }
.cell { width: 30px; height: 28px; display: flex; align-items: center; justify-content: center; flex: none; }
.cell svg { width: 20px; height: 20px; }
.cell.hole::before { content: ""; width: 24px; height: 24px; background: #0e0e0e; }
.cell.boxed svg { width: 24px; height: 24px; padding: 2px; background: #0e0e0e; }
.sws { display: flex; width: 242px; flex: none; }
.sws .cell { width: 30.200px; }
.sws .cell svg { width: 25px; height: 25px; padding: 0; }
.sws .cell.soft svg { color: #8b8b8b; background: #222; padding: 2px; }
.tw { width: 43px; display: flex; justify-content: center; flex: none; padding-left: 5px; }
.tw.open { padding-left: 11px; }
.tw svg, .grp svg { width: 19px; height: 19px; }
.lab { width: 24px; height: 24px; flex: none; }
.lab.teal { background: #3fa39c; } .lab.red { background: #bb3c3c; } .lab.blue { background: #6c7bdc; }
.num { width: 78px; padding-left: 18px; flex: none; }
.kind { width: 24px; display: flex; justify-content: center; font: bold 25px/1 "Liberation Serif", serif; letter-spacing: 0; flex: none; }
.kind svg { width: 23px; height: 23px; }
.lname { width: 310px; padding-left: 12px; flex: none; }
.num, .lname { padding-top: 1px; }
.spir { width: 24px; height: 24px; }
.lrow.layer .spir { margin: 0 14px 0 41px; }
.dd { background: #0c0c0c; border-radius: 4px; display: flex; align-items: center; justify-content: space-between; flex: none; }
.lrow.layer .dd { width: 176px; height: 28px; padding: 1px 15px 0; }
.pbody { width: 479px; display: flex; align-items: center; flex: none; padding-top: 2px; }
.grp { width: 38px; flex: none; display: flex; padding-left: 2px; }
.grp.open { padding-left: 6px; }
.watch { width: 26px; height: 28px; margin: -3px 11px 0 0; }
.watch.on { color: #4b93e0; background: #0b1726; }
.curve { width: 24px; height: 24px; margin-right: 14px; }
.pval { width: 309px; flex: none; display: flex; align-items: center; padding-left: 3px; }
.pval .amount { letter-spacing: -.008em; }
.pval .lk { width: 28px; height: 20px; margin: 0 10px 0 -3px; }
.pval .lk + .amount { letter-spacing: .01em; }
.pval .grey { color: #b6b6b6; }
.pval .dd { width: 261px; height: 29px; border: 2px solid #262626; padding: 0 15px; color: #b6b6b6; margin-top: -2px; }
.addw { margin-left: 186px; display: flex; align-items: center; gap: 7px; color: #b6b6b6; }

/* time graph */
.graph { width: 3293px; flex: none; position: relative; display: flex; flex-direction: column; overflow: hidden; }
.navbar { height: 20px; margin: 8px 11px 0 0; display: flex; align-items: center; background: linear-gradient(#3e3f36, #3e3f36) 14px 0 no-repeat; flex: none; }
.nav-start { width: 14px; height: 17px; background: #4096f3; border-radius: 9px 0 0 9px; }
.nav-range { width: 55px; height: 22px; background: linear-gradient(90deg, transparent 9px, #6d8cab 9px, #6d8cab 12px, transparent 12px), #6a6a6a; border: 2px solid #000; }
.nav-end { width: 12px; height: 17px; background: #4096f3; border-radius: 0 9px 9px 0; }
.truler { height: 38px; display: flex; overflow: hidden; flex: none; border-bottom: 2px solid #000; }
.tcell { width: 116.060px; flex: none; text-align: center; font-size: 20.500px; line-height: 30px; letter-spacing: 0; background: linear-gradient(#a8a8a8, #a8a8a8) 50% 100% / 2px 11px no-repeat; }
.tcell:first-child { margin-left: -42.500px; letter-spacing: -.07em; }
.workbar { height: 34px; padding-left: 15px; background: #1d1d1d; flex: none; display: flex; border-bottom: 2px solid #000; }
.workbar::before { content: ""; width: 11px; margin: 1px 1px 0 -12px; height: 30px; background: #4096f3; border-radius: 8px 0 0 8px; }
.workbar i { flex: 1; background: #636363; }
.cache { height: 7px; margin-left: 15px; background: #10bf1e; border-bottom: 1px solid #000; flex: none; }
.tracks { flex: 1; position: relative; background: linear-gradient(90deg, #1d1d1d 13px, #252525 13px); border-left: 2px solid #080808; }
.nowband { position: absolute; left: 537px; top: 0; width: 58px; height: 100%; background: #4b4b4b; }
.grow { height: 34px; position: relative; border-bottom: 2px solid rgba(8, 8, 8, .75); }
.grow.bar { background: linear-gradient(90deg, #2d2d2d 13px, transparent 13px); padding-left: 13px; border-bottom-color: #060c0e; }
.grow .fill { height: 100%; display: flex; padding-left: 524px; }
.grow .fill::after { content: ""; width: 58px; background: rgba(255, 255, 255, .08); }
.fill.teal { background: #3a6c6c; } .fill.red { background: #703438; } .fill.blue { background: #4e5887; }
.key { position: absolute; top: 7px; width: 19px; height: 20px; margin-left: -9.500px; }
.key.beam { width: 15px; margin-left: -7.500px; }
.playhead { position: absolute; left: 527px; top: 38px; width: 22px; bottom: 0; z-index: 2; }
.playhead::after { content: ""; position: absolute; left: 10px; top: 28px; width: 3px; bottom: 0; background: #4a8cf0; }
.playhead svg { width: 22px; height: 28px; }
.tside { width: 33px; padding: 73px 0 0 8px; }
.mk { width: 22px; height: 28px; }
.cb { width: 29px; height: 25px; margin: 12px 0 0 -5px; }
.tfoot { height: 34px; flex: none; display: flex; align-items: center; }
.tf-left { width: 1157px; height: 100%; border-top: 2px solid #080808; display: flex; align-items: center; flex: none; padding: 3px 0 0 7px; }
.tfb { width: 28px; height: 28px; margin-right: 10.200px; display: flex; align-items: center; justify-content: center; flex: none; }
.tfb.on { background: #474747; border-radius: 4px; }
.frt { margin-left: 45px; width: 212px; } .tf-left strong { color: #6fe0c0; width: 201px; font-weight: 600; font-size: 20.500px; }
.hill { width: 19px; height: 8px; } .rail { width: 82px; height: 4px; background: #4a4a4a; margin: 0 8px 0 15px; }
.knob { width: 20px; height: 20px; border: 4px solid #b4b4b4; border-radius: 50%; margin-right: 16px; }
.hills { width: 34px; height: 14px; margin-right: 16px; } .tfoot .pill { width: 35px; }

/* right column */
.right { width: 633px; display: flex; flex-direction: column; gap: 7px; }
.r-preview { height: 104px; background: #1d1d1d; flex: none; }
.rt { display: flex; align-items: center; gap: 21px; padding-left: 24px; height: 50px; }
.transport { display: flex; align-items: center; padding: 16px 0 0 94px; gap: 24px; }
.transport svg { width: 24px; height: 17px; }
.transport svg:nth-child(3) { width: 18px; margin: 0 4px 0 3px; }
.r-rest { flex: 1; background: #1d1d1d; }
.rsec { width: 598px; border-bottom: 2px solid #000; padding-top: 2px; }
.rt2 { display: flex; align-items: center; justify-content: space-between; padding: 0 20px 0 24px; height: 50px; }
.props { height: 96px; }
.align { height: 364px; padding-top: 3px; }
.alto { display: flex; align-items: center; padding-left: 12px; height: 50px; margin-top: 14px; }
.target { width: 212px; height: 47px; background: #2e2e2e; color: #696969; border-radius: 5px; display: flex; align-items: center; justify-content: space-between; padding: 0 18px; margin-left: auto; margin-right: 210px; }
.icons { display: flex; gap: 36px; padding: 22px 0 0 20px; color: #6e6e6e; }
.icons svg { width: 32px; height: 32px; }
.dist { margin: 23px 0 0 12px; width: 392px; border-top: 2px solid #151515; padding: 24px 0 1px; }
.audio { height: 51px; border-bottom-width: 3px; }
.fx { height: 104px; padding-top: 4px; }
.fx .searchbox { margin: 1px 10px 0 11px; padding-left: 13px; }
.newbin { width: 598px; height: 47px; border-right: 2px solid #000; padding: 13px 15px 0 0; display: flex; justify-content: flex-end; }
.newbin svg { width: 26px; height: 24px; }
```
FILE: app.js
```javascript
const icon = (name, cls = '') => `<svg class="${cls}"><use href="#${name}"/></svg>`;
const fill = (id, html) => { document.getElementById(id).innerHTML = html; };

// Tool bar: groups are split by separators
const toolGroups = [
  [['home']],
  [['arrow', 'on'], ['hand'], ['zoom']],
  [['orbit', 'dimt flyout'], ['pan', 'dimt flyout'], ['dolly', 'dimt flyout']],
  [['rotate'], ['anchor']],
  [['ellipse', 'flyout'], ['pen', 'flyout'], ['T', 'flyout']],
  [['brush'], ['stamp'], ['eraser']],
  [['roto', 'flyout']],
  [['pin', 'flyout']],
];
fill('tools', '<i class="grip"></i>' + toolGroups.map(g => g.map(([n, c = '']) =>
  `<span class="tool ${c}">${n === 'T' ? '<span class="tee">T</span>' : icon(n)}</span>`).join('')).join('<i class="vsep"></i>'));

// Project items
const items = ['Brd Button Filled', 'Brd Button Filled Pressed', 'Brd Button Filled Pressed 2', 'Brd Button Outlined',
  'Brd Button Outlined Pressed', 'Brd Button Outlined Pressed 2', 'Brd Card', 'Brd Fab', 'Brd Fab Copy', 'Brd Fab White',
  'Brd Input Enabled', 'Brd Input Error', 'Brd Input Focused', 'Brd List'];
fill('prows',
  `<div class="prow"><div class="item">${icon('down', 'ic20')}${icon('folder', 'ic-folder')}<span class="txt">Brand</span></div><i class="sq yellow"></i><span class="ty">Folder</span></div>` +
  items.map(t => `<div class="prow${t === 'Brd Input Focused' ? ' picked' : ''}"><div class="item">${icon('comp', 'ic-comp')}<span class="txt">${t}</span></div><i class="sq"></i><span class="ty">Composi</span></div>`).join(''));

// Viewer rulers
let h = '';
for (let v = -420; v <= 660; v += 20) h += `<div class="hcell">${v === -420 ? '' : Math.abs(v)}</div>`;
fill('hruler', h + '<i class="hcur"></i>');
let v = '';
for (let n = -80; n <= 140; n += 20) v += `<div class="vcell">${n === -80 || n > 120 ? '' : String(Math.abs(n)).split('').map(d => `<span>${d}</span>`).join('')}</div>`;
fill('vruler', v);

// Time ruler
let t = '';
for (let f = 0; f <= 56; f += 2) t += `<div class="tcell">${f ? String(f).padStart(2, '0') : '0:00'}f</div>`;
fill('truler', t);

// Layers and their properties
const L = (num, name, color, parent, o = {}) => ({ layer: true, num, name, color, parent, ...o });
const G = (name, o = {}) => ({ group: true, name, ...o });
const P = (name, val, o = {}) => ({ name, val, ...o });
const transform = (pos, scale, sk, op, ok) => [
  G('Contents', { add: true }), G('Transform', { open: true, reset: true }),
  P('Anchor Point', '0,0<u>,</u>0,0'), P('Position', pos),
  P('Scale', scale, { keys: sk, link: true }), P('Rotation', '0<u>x</u>+0,0<u>°</u>'), P('Opacity', op, { keys: ok }),
];
const rows = [
  L(1, 'Helper', 'teal', 'None', { shy: true }),
  L(2, 'Helper Text', 'red', '1. Helper', { text: true, vis: true }),
  L(3, 'Bound', 'blue', '1. Helper'),
  L(4, 'Cursor', 'blue', 'None'),
  L(5, 'Icon', 'teal', 'None', { shy: true, vis: true, open: true }),
  ...transform('232,0<u>,</u>28,0', '78,6<u>,</u>78,6<u>%</u>', [[0, 'hour'], [13, 'out']], '97<u>%</u>', [[0, 'in'], [10, 'out']]),
  L(6, 'Vector', 'blue', '5. Icon', { vis: true }),
  L(7, 'Bound', 'blue', '5. Icon'),
  L(8, 'Icon', 'teal', 'None', { shy: true, vis: true, open: true }),
  ...transform('200,0<u>,</u>28,0', '59,0<u>,</u>59,0<u>%</u>', [[3, 'hour'], [14, 'out']], '74<u>%</u>', [[3, 'in'], [12, 'out']]),
  L(9, 'Vector', 'blue', '8. Icon', { vis: true }),
  L(10, 'Input', 'red', 'None', { text: true, vis: true }),
  L(11, 'Helper Text', 'red', 'None', { text: true, vis: true }),
  L(12, 'Overlay', 'blue', 'None', { vis: true, open: true }),
  P('Opacity', '1<u>%</u>', { keys: [[7, 'in'], [16, 'out']] }),
  L(13, 'Surface', 'blue', 'None', { vis: true, open: true }),
  G('Contents', { open: true, add: true }),
  G('Surface Stroke', { depth: 1, eye: true, mode: 'Normal' }),
  G('Surface Fill', { depth: 1, eye: true, mode: 'Normal' }),
  G('Trim Paths 1', { depth: 1, eye: true, open: true }),
  P('Start', '35,2<u>%</u>', { depth: 1, keys: [[0, 'in'], [15, 'out']] }),
  P('End', '100,0<u>%</u>', { depth: 1 }),
  P('Offset', '0<u>x</u>+0,0<u>°</u>', { depth: 1 }),
  P('Trim Multiple Shapes', '', { mode: 'Simultaneously', bare: true }),
  G('Transform', { reset: true }),
];
const cell = (name, cls = '') => `<span class="cell ${cls}">${name ? icon(name) : ''}</span>`;
const twirl = (cls, open) => `<span class="${cls}${open ? ' open' : ''}">${icon(open ? 'down' : 'right')}</span>`;
const grey = s => s.replace(/<u>/g, '<span class="grey">').replace(/<\/u>/g, '</span>');

fill('lrows', rows.map(r => {
  if (r.layer) return `<div class="lrow layer">${r.vis ? cell('eye', 'boxed') : cell('', 'hole')}${cell()}${cell('', r.vis ? 'hole' : '')}${cell('', 'hole')}` +
    `${twirl('tw', r.open)}<i class="lab ${r.color}"></i><span class="num">${r.num}</span>` +
    `<span class="kind">${r.text ? 'T' : icon('star')}</span><span class="lname">${r.name}</span>` +
    `<span class="sws">${cell(r.shy ? 'shyhid' : 'shy', 'boxed')}${cell('sun', 'soft')}${cell('slash', 'boxed')}${cell()}${cell()}${cell('', 'hole').repeat(3)}</span>` +
    `${icon('spiral', 'spir')}<span class="dd">${r.parent}${icon('down', 'ic20')}</span></div>`;
  const nav = r.keys ? cell('kprev') + cell('kadd') + cell('knext') + cell() : (r.eye ? cell('eye', 'boxed') : cell()) + cell() + cell() + cell();
  const shift = (r.depth || 0) * 33;
  let body, val = '';
  if (r.group) {
    body = `<span class="pbody" style="padding-left:${47 + shift}px">${twirl('grp', r.open)}${r.name}</span>`;
    if (r.add) val = `<span class="addw">Add:${icon('addplay', 'ic24')}</span>`;
    if (r.reset) val = 'Reset';
  } else {
    const start = r.bare ? 153 : 114 + shift;
    body = `<span class="pbody" style="padding-left:${start}px">${r.bare ? '' : icon(r.keys ? 'watchon' : 'watch', 'watch' + (r.keys ? ' on' : ''))}${r.keys ? icon('curve', 'curve') : ''}${r.name}</span>`;
    val = (r.link ? icon('link', 'lk grey') : '') + `<span class="amount">${grey(r.val)}</span>`;
  }
  if (r.mode) val = `<span class="dd">${r.mode}${icon('down', 'ic20')}</span>`;
  return `<div class="lrow">${nav}${body}<span class="pval blue">${val}</span>${r.group ? '' : icon('spiral', 'spir')}</div>`;
}).join(''));

// Tracks; x of a frame, measured from the left edge of a track
const frameX = f => 14.5 + f * 58.03;
fill('grows', rows.map(r => {
  if (r.layer) return `<div class="grow bar"><div class="fill ${r.color}"></div></div>`;
  const keys = r.keys ? r.keys.map(([f, k]) => `<svg class="key" style="left:${frameX(f)}px"><use href="#key${k}"/></svg>`).join('')
    : r.bare ? '' : `<svg class="key beam" style="left:${frameX(9)}px"><use href="#ibeam"/></svg>`;
  return `<div class="grow">${keys}</div>`;
}).join(''));
```
